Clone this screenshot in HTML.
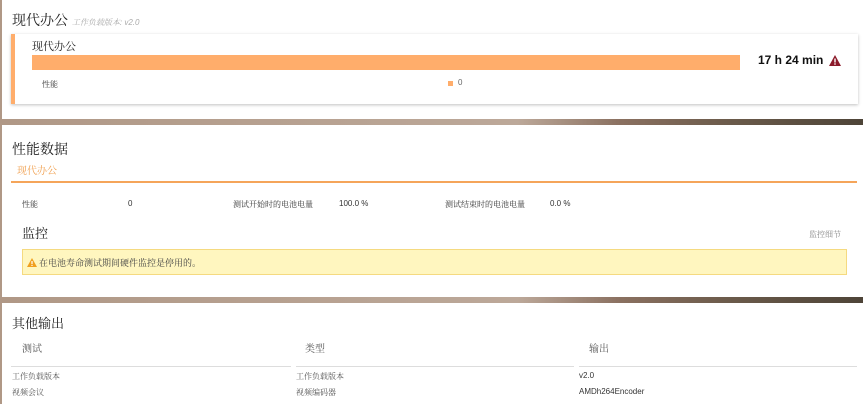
<!DOCTYPE html>
<html><head><meta charset="utf-8"><style>
*{margin:0;padding:0;box-sizing:border-box}
body{width:863px;height:404px;overflow:hidden;position:relative;background:linear-gradient(90deg,#b09886 0%,#bca899 60%,#8a7060 72%,#6a5a4a 85%,#4e4438 100%);font-family:"Liberation Sans","Noto Serif CJK SC","Noto Sans CJK SC",serif;color:#222}
.p{position:absolute;left:2px;right:0;background:#fff}
.a{position:absolute;white-space:nowrap}
</style></head><body>
<div class="p" style="top:0;height:119px">
 <div class="a" style="left:10px;top:10px;font-size:14px;color:#222">现代办公 <span style="font-size:8px;color:#aaa;font-style:italic">工作负载版本: v2.0</span></div>
 <div class="a" style="left:9px;top:34px;width:847px;height:70px;background:#fff;box-shadow:0 1px 3px rgba(0,0,0,.25);border-left:4px solid #ffad6b">
  <div class="a" style="left:17px;top:4px;font-size:11px">现代办公</div>
  <div class="a" style="left:17px;top:21px;width:708px;height:15px;background:#ffad6b"></div>
  <div class="a" style="left:27px;top:45px;font-size:8px;color:#333">性能</div>
  <div class="a" style="left:433px;top:47px;width:5px;height:5px;background:#ffad6b"></div>
  <div class="a" style="left:443px;top:44px;font-size:8px;color:#666">0</div>
  <div class="a" style="left:743px;top:19px;font-size:12px;font-weight:bold;color:#111;font-family:'Liberation Sans',sans-serif">17 h 24 min</div>
  <svg class="a" style="left:814px;top:21px" width="12" height="11" viewBox="0 0 12 11"><path d="M6 0L12 11H0Z" fill="#8b1a2a"/><rect x="5.3" y="3.5" width="1.4" height="4" fill="#fff"/><rect x="5.3" y="8.3" width="1.4" height="1.4" fill="#fff"/></svg>
 </div>
</div>
<div class="p" style="top:125px;height:172px">
 <div class="a" style="left:10px;top:14px;font-size:14px">性能数据</div>
 <div class="a" style="left:15px;top:37px;font-size:10px;color:#f0a050">现代办公</div>
 <div class="a" style="left:9px;top:56px;width:846px;height:2px;background:#f5a55a"></div>
 <div class="a" style="left:20px;top:74px;font-size:8px;color:#333">性能</div>
 <div class="a" style="left:126px;top:74px;font-size:8px;color:#333">0</div>
 <div class="a" style="left:231px;top:74px;font-size:8px;color:#333">测试开始时的电池电量</div>
 <div class="a" style="left:337px;top:74px;font-size:8px;color:#333">100.0 %</div>
 <div class="a" style="left:443px;top:74px;font-size:8px;color:#333">测试结束时的电池电量</div>
 <div class="a" style="left:548px;top:74px;font-size:8px;color:#333">0.0 %</div>
 <div class="a" style="left:20px;top:98px;font-size:13px">监控</div>
 <div class="a" style="left:807px;top:104px;font-size:8px;color:#888">监控细节</div>
 <div class="a" style="left:20px;top:124px;width:825px;height:26px;background:#fff6bf;border:1px solid #f5da80"></div>
 <svg class="a" style="left:25px;top:133px" width="10" height="9" viewBox="0 0 10 9"><path d="M5 0L10 9H0Z" fill="#f0a020"/><rect x="4.4" y="3" width="1.2" height="3" fill="#fff"/><rect x="4.4" y="6.8" width="1.2" height="1.2" fill="#fff"/></svg>
 <div class="a" style="left:37px;top:131px;font-size:9px;color:#444">在电池寿命测试期间硬件监控是停用的。</div>
</div>
<div class="p" style="top:303px;height:101px">
 <div class="a" style="left:10px;top:10px;font-size:13px">其他输出</div>
 <div class="a" style="left:20px;top:37px;font-size:10px;color:#555">测试</div>
 <div class="a" style="left:303px;top:37px;font-size:10px;color:#555">类型</div>
 <div class="a" style="left:587px;top:37px;font-size:10px;color:#555">输出</div>
 <div class="a" style="left:9px;top:63px;width:280px;height:1px;background:#ddd"></div>
 <div class="a" style="left:294px;top:63px;width:278px;height:1px;background:#ddd"></div>
 <div class="a" style="left:577px;top:63px;width:278px;height:1px;background:#ddd"></div>
 <div class="a" style="left:10px;top:68px;font-size:8px;color:#555">工作负载版本</div>
 <div class="a" style="left:294px;top:68px;font-size:8px;color:#555">工作负载版本</div>
 <div class="a" style="left:577px;top:68px;font-size:8px;color:#333">v2.0</div>
 <div class="a" style="left:10px;top:84px;font-size:8px;color:#555">视频会议</div>
 <div class="a" style="left:294px;top:84px;font-size:8px;color:#555">视频编码器</div>
 <div class="a" style="left:577px;top:84px;font-size:8px;color:#333">AMDh264Encoder</div>
</div>
</body></html>
